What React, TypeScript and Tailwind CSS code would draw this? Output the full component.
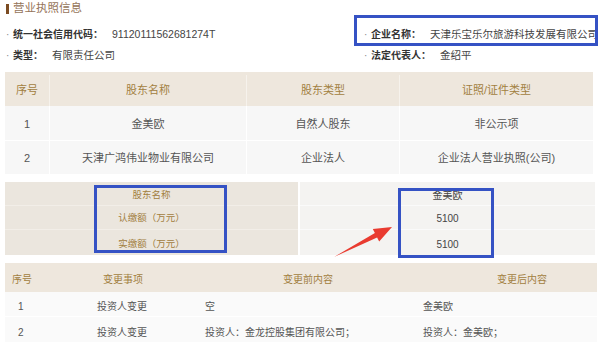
const font = "font-['Liberation_Sans','Noto_Sans_CJK_SC',sans-serif]";

const shareholders = [
  { no: "1", name: "金美欧", type: "自然人股东", cert: "非公示项" },
  { no: "2", name: "天津广鸿伟业物业有限公司", type: "企业法人", cert: "企业法人营业执照(公司)" },
];

const changes = [
  { no: "1", item: "投资人变更", before: "空", after: "金美欧" },
  { no: "2", item: "投资人变更", before: "投资人：金龙控股集团有限公司；", after: "投资人：金美欧；" },
];

const InfoItem = ({ label, value }: { label: string; value: string }) => (
  <div className="flex h-[21px] items-center text-[10px] text-[#333]">
    <span className="w-[7px] text-[#888]">·</span>
    <span className="font-bold">{label}</span>
    <span className="ml-[9px] text-[10.5px] text-[#444]">{value}</span>
  </div>
);

const App = () => {
  return (
    <div className={`relative h-[349px] w-[602px] overflow-hidden bg-white ${font}`}>
      {/* Title */}
      <div className="flex h-[18px] items-center pl-[6px]">
        <div className="h-[10px] w-[3px] bg-[#7b4b22]" />
        <span className="ml-[4px] text-[11.5px] text-[#957459]">营业执照信息</span>
      </div>

      {/* Basic info */}
      <div className="mt-[6px] flex">
        <div className="w-[362px] pl-[6px]">
          <InfoItem label="统一社会信用代码：" value="91120111562681274T" />
          <InfoItem label="类型：" value="有限责任公司" />
        </div>
        <div className="pl-[2px]">
          <InfoItem label="企业名称：" value="天津乐宝乐尔旅游科技发展有限公司" />
          <InfoItem label="法定代表人：" value="金绍平" />
        </div>
      </div>

      {/* Shareholder table */}
      <div className="ml-[5px] mt-[6px] w-[588px] text-[11px]">
        <div className="grid h-[34px] grid-cols-[45px_197px_153px_193px] bg-[#eee7dd] pt-[3px] text-[#a2803f]">
          <div className="flex items-center justify-center border-r border-[#f6f2ec]">序号</div>
          <div className="flex items-center justify-center border-r border-[#f6f2ec]">股东名称</div>
          <div className="flex items-center justify-center border-r border-[#f6f2ec]">股东类型</div>
          <div className="flex items-center justify-center">证照/证件类型</div>
        </div>
        {shareholders.map((r, i) => (
          <div
            key={r.no}
            className={`grid grid-cols-[45px_197px_153px_193px] bg-[#f7f7f7] text-[#555] ${i === 0 ? "h-[35px] border-b border-white" : "h-[33px]"}`}
          >
            <div className="flex items-center justify-center border-r border-white pt-[2px]">{r.no}</div>
            <div className="flex items-center justify-center border-r border-white pt-[2px]">{r.name}</div>
            <div className="flex items-center justify-center border-r border-white pt-[2px]">{r.type}</div>
            <div className="flex items-center justify-center pt-[2px]">{r.cert}</div>
          </div>
        ))}
      </div>

      {/* Capital table */}
      <div className="ml-[5px] mt-[8px] flex h-[73px] w-[590px] gap-[2px] text-[9.5px]">
        <div className="flex w-[293px] flex-col bg-[#ebe6de] text-[#a2803f]">
          <div className="flex h-[24px] items-center justify-center border-b border-[#f2eee8] pt-[4px]">股东名称</div>
          <div className="flex h-[24px] items-center justify-center border-b border-[#f2eee8] pt-[2px]">认缴额（万元）</div>
          <div className="flex flex-1 items-center justify-center pt-[3px]">实缴额（万元）</div>
        </div>
        <div className="flex flex-1 flex-col bg-[#f4f3f1] text-[10px] text-[#444]">
          <div className="flex h-[24px] items-center justify-center border-b border-[#fafafa] pt-[4px]">金美欧</div>
          <div className="flex h-[24px] items-center justify-center border-b border-[#fafafa] pt-[2px]">5100</div>
          <div className="flex flex-1 items-center justify-center pt-[3px]">5100</div>
        </div>
      </div>

      {/* Change records */}
      <div className="ml-[5px] mt-[8px] w-[592px] text-[10px]">
        <div className="grid h-[29px] grid-cols-[80px_115px_215px_182px] items-center bg-[#eee7dd] pt-[3px] text-[#a2803f]">
          <div className="pl-[7px]">序号</div>
          <div className="pl-[18px]">变更事项</div>
          <div className="pl-[83px]">变更前内容</div>
          <div className="pl-[82px]">变更后内容</div>
        </div>
        {changes.map((r, i) => (
          <div
            key={r.no}
            className={`grid h-[25px] grid-cols-[80px_115px_215px_182px] items-center bg-[#fafafa] pt-[5px] text-[#555] ${i === 0 ? "border-b border-white" : ""}`}
          >
            <div className="pl-[13px]">{r.no}</div>
            <div className="pl-[12px]">{r.item}</div>
            <div className="pl-[5px]">{r.before}</div>
            <div className="pl-[8px]">{r.after}</div>
          </div>
        ))}
      </div>

      {/* Annotations */}
      <div className="pointer-events-none absolute left-[354px] top-[15px] h-[31px] w-[244px] border-[3px] border-[#3552c4]" />
      <div className="pointer-events-none absolute left-[94px] top-[185px] h-[68px] w-[133px] border-[3px] border-[#3552c4]" />
      <div className="pointer-events-none absolute left-[398px] top-[188px] h-[70px] w-[96px] border-[3px] border-[#3552c4]" />
      <svg className="pointer-events-none absolute left-0 top-0" width="602" height="349">
        <polygon
          points="334,257 374.9,233 372.8,229 392,227 379.2,241.4 377.1,237.4"
          fill="#e93b30"
        />
      </svg>
    </div>
  );
};

export default App;
